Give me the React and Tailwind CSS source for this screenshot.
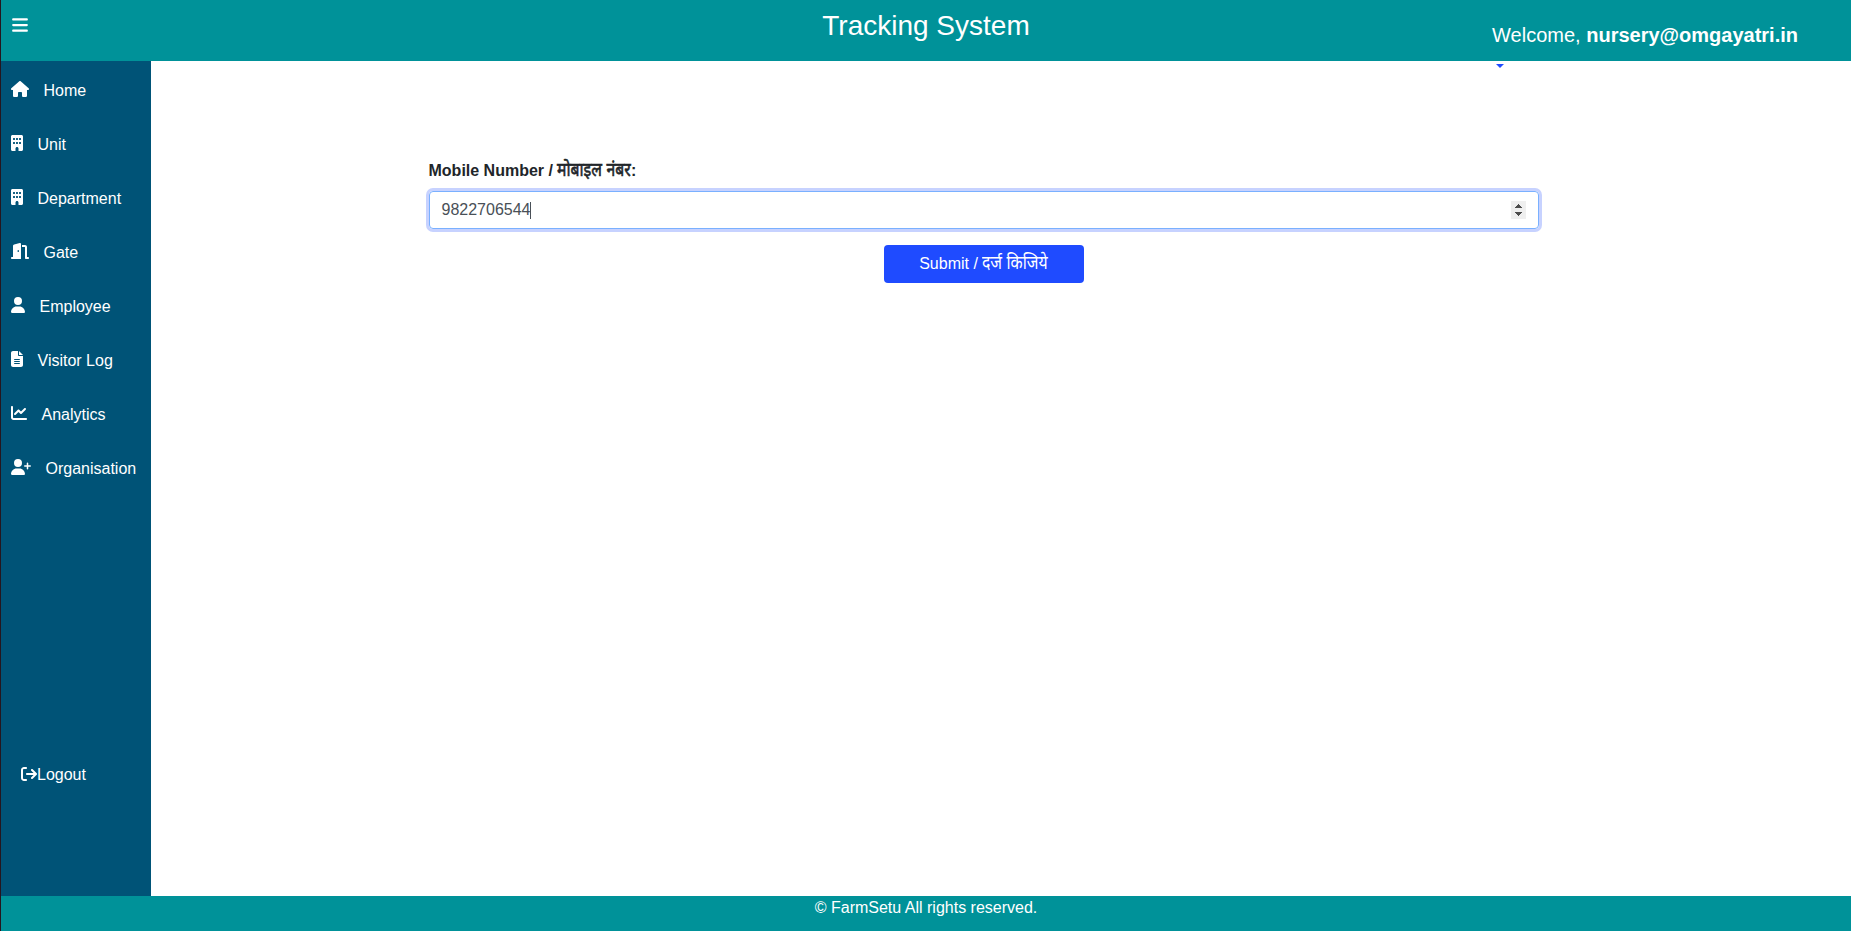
import React from "react";
import {
  FaArrowRightFromBracket,
  FaBars,
  FaBuilding,
  FaChartLine,
  FaDoorOpen,
  FaFileLines,
  FaHouse,
  FaUser,
  FaUserPlus,
} from "react-icons/fa6";

const links = [
  { label: "Home", Icon: FaHouse, size: "w-[18px]" },
  { label: "Unit", Icon: FaBuilding, size: "w-3" },
  { label: "Department", Icon: FaBuilding, size: "w-3" },
  { label: "Gate", Icon: FaDoorOpen, size: "w-[18px]" },
  { label: "Employee", Icon: FaUser, size: "w-3.5" },
  { label: "Visitor Log", Icon: FaFileLines, size: "w-3" },
  { label: "Analytics", Icon: FaChartLine, size: "w-4" },
  { label: "Organisation", Icon: FaUserPlus, size: "w-5" },
];

function Header() {
  return (
    <header className="grid h-[61px] shrink-0 grid-cols-[1fr_auto_1fr] items-start bg-[#009299] text-white">
      <button type="button" aria-label="Menu" className="mt-4 ml-[11px] w-4">
        <FaBars className="h-[18px] w-4" />
      </button>
      <h1 className="mt-[9px] text-[28px] leading-[34px]">Tracking System</h1>
      <p className="mt-5 mr-[53px] text-right text-xl leading-[30px]">
        Welcome, <strong>nursery@omgayatri.in</strong>
      </p>
    </header>
  );
}

function Sidebar() {
  return (
    <nav className="flex w-[150px] shrink-0 flex-col bg-[#005377] pt-[3px] text-white">
      {links.map(({ label, Icon, size }) => (
        <a key={label} href="#" className="flex h-[54px] items-center gap-[14.5px] pl-2.5">
          <Icon className={`mb-1 h-4 shrink-0 ${size}`} />
          <span className="whitespace-nowrap">{label}</span>
        </a>
      ))}
      <a href="#" className="mt-auto mb-[109px] flex h-6 items-center pl-5">
        <FaArrowRightFromBracket className="mb-0.5 h-4 w-4" />
        <span>Logout</span>
      </a>
    </nav>
  );
}

function Stepper() {
  return (
    <svg className="h-[18px] w-[15px]" viewBox="0 0 15 18" shapeRendering="crispEdges">
      <rect width="15" height="18" fill="#efefef" />
      <path d="M7 3h1v1h1v1h1v1h1v1H4V6h1V5h1V4h1zM4 11h7v1h-1v1H9v1H8v1H7v-1H6v-1H5v-1H4z" fill="#4d4d4d" />
    </svg>
  );
}

export default function App() {
  return (
    <div className="flex h-screen flex-col border-l border-[#25161f] bg-white font-['Liberation_Sans','Noto_Sans',sans-serif] text-base text-[#212529]">
      <Header />
      <div className="flex min-h-0 flex-1">
        <Sidebar />
        <main className="relative flex-1">
          <svg className="absolute top-[3px] left-[1345px] h-1 w-2" viewBox="0 0 8 4">
            <path d="M0 0h8L4 4z" fill="#1f4bff" />
          </svg>
          <div className="ml-[278px] flex w-[1110px] flex-col pt-[98px]">
            <label className="-ml-[0.5px] h-6 font-bold leading-6">
              Mobile Number /{" "}
              <span className="-mr-px inline-block origin-[0_75%] scale-x-[0.985] scale-y-[1.15] font-normal [-webkit-text-stroke:0.5px_#212529]">
                मोबाइल नंबर
              </span>
              :
            </label>
            <div className="mt-2 flex h-[38px] items-center rounded border border-[#7ab0ff] pr-3 pl-[11.5px] text-[#495057] ring-[3px] ring-[#c7d2ff]">
              <span className="-mr-[0.5px]">9822706544</span>
              <span className="h-[17px] w-px bg-[#495057]" />
              <span className="ml-auto">
                <Stepper />
              </span>
            </div>
            <button
              type="button"
              className="mt-4 h-[38px] w-[200px] self-center rounded bg-[#1f4bff] leading-6 text-white"
            >
              Submit /{" "}
              <span className="inline-block origin-[0_75%] scale-x-[0.985] scale-y-[1.15]">दर्ज किजिये</span>
            </button>
          </div>
        </main>
      </div>
      <footer className="h-[35px] shrink-0 bg-[#009299] text-center leading-6 text-white">
        © FarmSetu All rights reserved.
      </footer>
    </div>
  );
}
